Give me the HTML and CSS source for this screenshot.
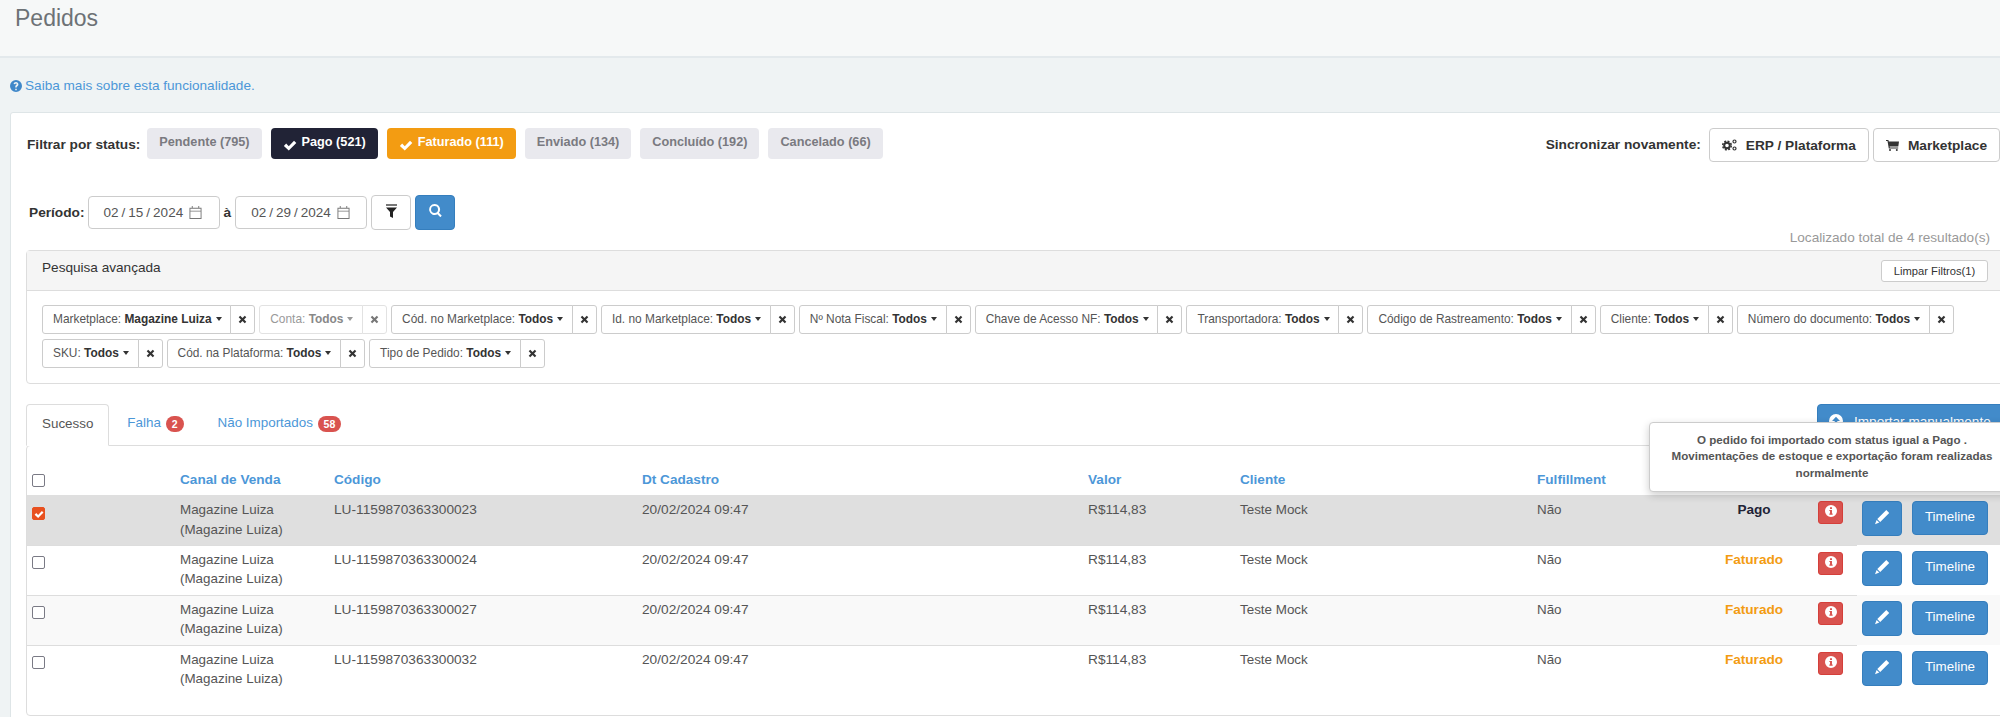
FILE: index.html
```html
<!DOCTYPE html>
<html lang="pt-BR">
<head>
<meta charset="utf-8">
<title>Pedidos</title>
<link rel="stylesheet" href="styles.css">
</head>
<body>
<svg class="sprite" width="0" height="0" aria-hidden="true">
  <symbol id="i-ok" viewBox="0 0 16 16"><path d="M1 9l2.600-2.600 3 3L12.600 3l2.600 2.600-8.600 8.600z"/></symbol>
  <symbol id="i-help" viewBox="0 0 16 16"><path fill-rule="evenodd" d="M8 0a8 8 0 1 1 0 16A8 8 0 0 1 8 0zM7 11.500v2h2v-2zM8 2.600C6.200 2.600 5 3.600 4.800 5.400l2 .3c.1-.8.500-1.200 1.200-1.200.6 0 1 .4 1 .9 0 .5-.3.800-.9 1.300-.8.600-1.100 1.200-1.100 2.200V10h2v-.4c0-.6.200-.8.900-1.300.8-.6 1.300-1.300 1.300-2.400 0-2-1.400-3.300-3.200-3.300z"/></symbol>
  <symbol id="i-cal" viewBox="0 0 14 14"><path fill-rule="evenodd" d="M3 0h1v2h6V0h1v2h2.500v12H.5V2H3zM1.500 3v2h11V3zm0 3v7h11V6z"/></symbol>
  <symbol id="i-filter" viewBox="0 0 11 14"><path fill="#777" d="M0 0h11v2H0z"/><path d="M0 3.500h11L7 8v6l-3-1.500V8z"/></symbol>
  <symbol id="i-search" viewBox="0 0 16 16"><path fill-rule="evenodd" d="M6.800 0a6.800 6.800 0 0 1 5.400 10.900l3.500 3.500-1.800 1.800-3.500-3.500A6.800 6.800 0 1 1 6.800 0zm0 2.500a4.300 4.300 0 1 0 0 8.600 4.300 4.300 0 0 0 0-8.600z"/></symbol>
  <symbol id="i-gears" viewBox="0 0 15 12">
    <g fill="none" stroke="currentColor">
      <circle cx="5" cy="6.500" r="2.800" stroke-width="2"/>
      <circle cx="5" cy="6.500" r="4.300" stroke-width="1.500" stroke-dasharray="2 1.380"/>
      <circle cx="12.500" cy="2.500" r="1.500" stroke-width="1.200"/>
      <circle cx="12.500" cy="9.500" r="1.500" stroke-width="1.200"/>
    </g>
  </symbol>
  <symbol id="i-cart" viewBox="0 0 13 11"><path d="M0 0h2.400l.4 1.400H13l-.7 5H3.600l.2 1.100h8.400v1H2.800L1.500 1H0z"/><circle cx="4" cy="10" r="1"/><circle cx="10.800" cy="10" r="1"/></symbol>
  <symbol id="i-pen" viewBox="0 0 16 16"><path d="M12.300 1l2.900 2.900-9 9L3.300 10zM2.600 10.900l2.700 2.700-4.300 1.600z"/></symbol>
  <symbol id="i-info" viewBox="0 0 16 16"><path fill-rule="evenodd" d="M8 0a8 8 0 1 1 0 16A8 8 0 0 1 8 0zM6.700 3v2.400h2.600V3zM5.800 6.600v1.500h.9v3.200h-.9v1.600h4.400v-1.600h-.9V6.600z"/></symbol>
  <symbol id="i-up" viewBox="0 0 16 16"><path fill-rule="evenodd" d="M8 0a8 8 0 1 1 0 16A8 8 0 0 1 8 0zm0 3L3.500 8H6.500v4.500h3V8h3z"/></symbol>
  <symbol id="i-x" viewBox="0 0 10 10"><path d="M2.500.8L5 3.300 7.500.8l1.700 1.700L6.700 5l2.500 2.500-1.700 1.700L5 6.700 2.500 9.200.8 7.500 3.300 5 .8 2.500z"/></symbol>
</svg>

<header class="page-head"><h1>Pedidos</h1></header>

<p class="help"><svg class="ic help-ic"><use href="#i-help"/></svg> <a href="#">Saiba mais sobre esta funcionalidade.</a></p>

<main class="card">
  <div class="status-row">
    <div class="status-group">
      <span class="lbl">Filtrar por status:</span>
      <a class="chip">Pendente (795)</a>
      <a class="chip dark"><svg class="ic ok"><use href="#i-ok"/></svg>Pago (521)</a>
      <a class="chip orange"><svg class="ic ok"><use href="#i-ok"/></svg>Faturado (111)</a>
      <a class="chip">Enviado (134)</a>
      <a class="chip">Concluído (192)</a>
      <a class="chip">Cancelado (66)</a>
    </div>
    <div class="sync">
      <span class="lbl sync-lbl">Sincronizar novamente:</span>
      <button class="btn-sync"><svg class="ic ic-gears"><use href="#i-gears"/></svg>ERP / Plataforma</button>
      <button class="btn-sync"><svg class="ic ic-cart"><use href="#i-cart"/></svg>Marketplace</button>
    </div>
  </div>

  <div class="period-row">
    <span class="lbl">Período:</span>
    <span class="date"><span>02</span><i>/</i><span>15</span><i>/</i><span>2024</span><svg class="ic cal"><use href="#i-cal"/></svg></span>
    <span class="lbl a">à</span>
    <span class="date"><span>02</span><i>/</i><span>29</span><i>/</i><span>2024</span><svg class="ic cal"><use href="#i-cal"/></svg></span>
    <button class="btn-filter"><svg class="ic ic-filter"><use href="#i-filter"/></svg></button>
    <button class="btn-search"><svg class="ic"><use href="#i-search"/></svg></button>
  </div>

  <div class="results">Localizado total de 4 resultado(s)</div>

  <section class="panel">
    <div class="panel-head">
      <span>Pesquisa avançada</span>
      <button class="btn-clear">Limpar Filtros(1)</button>
    </div>
    <div class="panel-body">
      <div class="f"><span class="f-l">Marketplace: <b>Magazine Luiza</b><u></u></span><span class="f-x"><svg class="ic"><use href="#i-x"/></svg></span></div>
      <div class="f off"><span class="f-l">Conta: <b>Todos</b><u></u></span><span class="f-x"><svg class="ic"><use href="#i-x"/></svg></span></div>
      <div class="f"><span class="f-l">Cód. no Marketplace: <b>Todos</b><u></u></span><span class="f-x"><svg class="ic"><use href="#i-x"/></svg></span></div>
      <div class="f"><span class="f-l">Id. no Marketplace: <b>Todos</b><u></u></span><span class="f-x"><svg class="ic"><use href="#i-x"/></svg></span></div>
      <div class="f"><span class="f-l">Nº Nota Fiscal: <b>Todos</b><u></u></span><span class="f-x"><svg class="ic"><use href="#i-x"/></svg></span></div>
      <div class="f"><span class="f-l">Chave de Acesso NF: <b>Todos</b><u></u></span><span class="f-x"><svg class="ic"><use href="#i-x"/></svg></span></div>
      <div class="f"><span class="f-l">Transportadora: <b>Todos</b><u></u></span><span class="f-x"><svg class="ic"><use href="#i-x"/></svg></span></div>
      <div class="f"><span class="f-l">Código de Rastreamento: <b>Todos</b><u></u></span><span class="f-x"><svg class="ic"><use href="#i-x"/></svg></span></div>
      <div class="f"><span class="f-l">Cliente: <b>Todos</b><u></u></span><span class="f-x"><svg class="ic"><use href="#i-x"/></svg></span></div>
      <div class="f"><span class="f-l">Número do documento: <b>Todos</b><u></u></span><span class="f-x"><svg class="ic"><use href="#i-x"/></svg></span></div>
      <div class="f"><span class="f-l">SKU: <b>Todos</b><u></u></span><span class="f-x"><svg class="ic"><use href="#i-x"/></svg></span></div>
      <div class="f"><span class="f-l">Cód. na Plataforma: <b>Todos</b><u></u></span><span class="f-x"><svg class="ic"><use href="#i-x"/></svg></span></div>
      <div class="f"><span class="f-l">Tipo de Pedido: <b>Todos</b><u></u></span><span class="f-x"><svg class="ic"><use href="#i-x"/></svg></span></div>
    </div>
  </section>

  <div class="tabs-row">
    <nav class="tabs">
      <a class="tab active">Sucesso</a>
      <a class="tab">Falha <span class="badge">2</span></a>
      <a class="tab">Não Importados <span class="badge">58</span></a>
    </nav>
    <button class="btn-import"><svg class="ic"><use href="#i-up"/></svg>Importar manualmente</button>
    <div class="tooltip">O pedido foi importado com status igual a Pago .<br>Movimentações de estoque e exportação foram realizadas normalmente</div>
  </div>

  <section class="table-wrap">
    <table>
      <colgroup>
        <col class="c-check"><col class="c-canal"><col class="c-cod"><col class="c-dt"><col class="c-val"><col class="c-cli"><col class="c-ful"><col class="c-st"><col class="c-info"><col class="c-act">
      </colgroup>
      <thead>
        <tr><th><span class="box"></span></th><th>Canal de Venda</th><th>Código</th><th>Dt Cadastro</th><th>Valor</th><th>Cliente</th><th>Fulfillment</th><th></th><th></th><th></th></tr>
      </thead>
      <tbody>
        <tr class="sel">
          <td><span class="box on"><svg class="ic"><use href="#i-ok"/></svg></span></td>
          <td>Magazine Luiza<br>(Magazine Luiza)</td><td class="num">LU-1159870363300023</td><td class="num">20/02/2024 09:47</td><td class="num">R$114,83</td><td>Teste Mock</td><td>Não</td>
          <td class="st st-pago">Pago</td>
          <td><button class="btn-info"><svg class="ic"><use href="#i-info"/></svg></button></td>
          <td class="acts"><button class="btn-edit"><svg class="ic"><use href="#i-pen"/></svg></button><button class="btn-time">Timeline</button></td>
        </tr>
        <tr>
          <td><span class="box"></span></td>
          <td>Magazine Luiza<br>(Magazine Luiza)</td><td class="num">LU-1159870363300024</td><td class="num">20/02/2024 09:47</td><td class="num">R$114,83</td><td>Teste Mock</td><td>Não</td>
          <td class="st st-fat">Faturado</td>
          <td><button class="btn-info"><svg class="ic"><use href="#i-info"/></svg></button></td>
          <td class="acts"><button class="btn-edit"><svg class="ic"><use href="#i-pen"/></svg></button><button class="btn-time">Timeline</button></td>
        </tr>
        <tr class="alt">
          <td><span class="box"></span></td>
          <td>Magazine Luiza<br>(Magazine Luiza)</td><td class="num">LU-1159870363300027</td><td class="num">20/02/2024 09:47</td><td class="num">R$114,83</td><td>Teste Mock</td><td>Não</td>
          <td class="st st-fat">Faturado</td>
          <td><button class="btn-info"><svg class="ic"><use href="#i-info"/></svg></button></td>
          <td class="acts"><button class="btn-edit"><svg class="ic"><use href="#i-pen"/></svg></button><button class="btn-time">Timeline</button></td>
        </tr>
        <tr>
          <td><span class="box"></span></td>
          <td>Magazine Luiza<br>(Magazine Luiza)</td><td class="num">LU-1159870363300032</td><td class="num">20/02/2024 09:47</td><td class="num">R$114,83</td><td>Teste Mock</td><td>Não</td>
          <td class="st st-fat">Faturado</td>
          <td><button class="btn-info"><svg class="ic"><use href="#i-info"/></svg></button></td>
          <td class="acts"><button class="btn-edit"><svg class="ic"><use href="#i-pen"/></svg></button><button class="btn-time">Timeline</button></td>
        </tr>
      </tbody>
    </table>
  </section>
</main>
</body>
</html>
```

FILE: styles.css
```css
* { box-sizing: border-box; }
html, body { margin: 0; height: 717px; overflow: hidden; }
body { width: 2000px; background: #eff3f4; font: 13.6px/20px "Liberation Sans", Arial, sans-serif; color: #555; }
.sprite { position: absolute; }
.ic { display: block; width: 14px; height: 14px; fill: currentColor; flex: none; }
button { font-family: inherit; cursor: pointer; }

.page-head { height: 58px; background: #f6f8f8; border-bottom: 2px solid #e3e9ec; padding-left: 15px; }
.page-head h1 { margin: 0; font-size: 23px; font-weight: 400; line-height: 36px; color: #6d7276; }

.help { display: flex; align-items: center; gap: 3px; margin: 18px 0 16px 10px; height: 20px; font-size: 13.6px; }
.help a { color: #4c97d8; text-decoration: none; }
.help-ic { width: 12px; height: 12px; color: #3f87c9; }

.card { margin: 0 -20px 0 10px; background: #fff; border: 1px solid #dee5e7; padding: 15px 16px 0 15px; border-radius: 3px 0 0 0; height: 620px; }

.status-row { display: flex; justify-content: space-between; height: 35px; }
.status-group { display: flex; gap: 9px; }
.lbl { font-weight: 700; color: #333; font-size: 13.7px; }
.status-group .lbl { margin: 7px -2px 0 1px; }
.chip { display: flex; align-items: center; height: 31px; padding: 0 12px 3px; background: #e9e9ee; border-radius: 4px; font-weight: 700; font-size: 12.7px; color: #7a7a80; }
.chip.dark { background: #212336; color: #fff; }
.chip.orange { background: #f39c12; color: #fff; }
.ok { width: 14px; height: 14px; margin: 5px 5px 0 0; }
.sync { display: flex; gap: 4px; align-items: flex-start; margin-right: 3px; }
.sync-lbl { margin: 7px 4px 0 0; }
.btn-sync { display: flex; align-items: center; gap: 9px; height: 34px; padding: 0 12px; background: #fff; border: 1px solid #ccc; border-radius: 4px; font-size: 13.7px; font-weight: 700; color: #333; }
.btn-sync .ic-gears { width: 15px; height: 12px; }
.btn-sync .ic-cart { width: 13px; height: 11px; }

.period-row { display: flex; align-items: center; height: 35px; margin-top: 32px; padding-left: 3px; }
.period-row .lbl { margin-right: 3px; }
.period-row .a { margin: 0 4px; }
.date { display: flex; align-items: center; width: 132px; height: 33px; padding-left: 15px; background: #fff; border: 1px solid #ccc; border-radius: 4px; color: #555; font-size: 13.5px; }
.date i { font-style: normal; margin: 0 3px; }
.cal { width: 13px; height: 13px; margin-left: 6px; color: #777; }
.btn-filter, .btn-search { display: flex; align-items: center; justify-content: center; width: 40px; height: 35px; border-radius: 4px; padding: 0 0 4px; }
.btn-filter { margin-left: 4px; background: #fff; border: 1px solid #ccc; color: #222; }
.btn-filter .ic-filter { width: 11px; height: 14px; }
.btn-search { margin-left: 4px; background: #428bca; border: 1px solid #357ebd; color: #fff; }
.btn-search .ic { width: 13px; height: 13px; }

.results { height: 20px; margin-top: -2px; text-align: right; color: #999; font-size: 13.6px; padding-right: 13px; }

.panel { margin: 2px -16px 0 0; border: 1px solid #ddd; border-radius: 4px; background: #fff; }
.panel-head { display: flex; justify-content: space-between; align-items: center; height: 40px; padding: 0 30px 0 15px; background: #f5f5f5; border-bottom: 1px solid #ddd; color: #333; font-size: 13.6px; }
.panel-head span { margin-top: -6px; }
.btn-clear { height: 22px; width: 107px; padding: 0; background: #fff; border: 1px solid #ccc; border-radius: 3px; font-size: 11.2px; color: #333; margin-top: 1px; }
.panel-body { display: flex; flex-wrap: wrap; gap: 5px 4px; padding: 14px 15px 15px; }
.f { display: flex; height: 29px; font-size: 11.9px; color: #555; }
.f-l { display: flex; align-items: center; white-space: pre; padding: 0 8.7px 2px 10px; background: #fff; border: 1px solid #ccc; border-radius: 3px 0 0 3px; }
.f-l b { color: #333; }
.f-l u { width: 0; height: 0; margin-left: 4px; border-left: 3.5px solid transparent; border-right: 3.5px solid transparent; border-top: 4px solid #333; }
.f-x { display: flex; align-items: center; justify-content: center; width: 25px; margin-left: -1px; background: #fff; border: 1px solid #ccc; border-radius: 0 3px 3px 0; color: #333; }
.f-x .ic { width: 9px; height: 9px; }
.f.off .f-l { color: #999; border-color: #e2e2e2; }
.f.off .f-l b { color: #888; }
.f.off .f-l u { border-top-color: #999; }
.f.off .f-x { border-color: #e2e2e2; color: #777; }

.tabs-row { position: relative; display: flex; justify-content: space-between; margin: 20px -16px 0 0; height: 41px; }
.tabs { display: flex; }
.tab { display: block; height: 41px; padding: 9px 15px 0; font-size: 13.4px; color: #4c97d8; margin-right: 4px; white-space: nowrap; }
.tab.active { background: #fff; border: 1px solid #ddd; border-bottom-color: #fff; border-radius: 4px 4px 0 0; color: #555; height: 42px; margin-right: 3px; position: relative; z-index: 1; }
.badge { display: inline-block; min-width: 18px; height: 16px; padding: 0 6px; margin-left: 1px; border-radius: 9px; background: #d9534f; color: #fff; font-size: 10.5px; font-weight: 700; line-height: 16px; text-align: center; vertical-align: -1px; }
.btn-import { display: flex; align-items: center; gap: 11px; width: 202px; height: 34px; padding: 0 0 0 11px; background: #428bca; border: 1px solid #357ebd; border-radius: 4px; color: #fff; font-size: 13.6px; }
.tooltip { position: absolute; left: 1623px; top: 18px; z-index: 5; width: 366px; height: 70px; padding: 9px 20px; background: #fff; border: 1px solid #ccc; border-radius: 4px; box-shadow: 0 3px 8px rgba(0,0,0,.2); text-align: center; font-size: 11.6px; line-height: 16.3px; font-weight: 700; color: #555; }

.table-wrap { height: 271px; margin-right: -16px; border: 1px solid #ddd; border-radius: 4px; background: #fff; }
table { width: 1973px; table-layout: fixed; border-collapse: collapse; }
.c-check { width: 148px; } .c-canal { width: 154px; } .c-cod { width: 308px; } .c-dt { width: 446px; } .c-val { width: 152px; } .c-cli { width: 297px; } .c-ful { width: 163px; } .c-st { width: 118px; } .c-info { width: 44px; } .c-act { width: 143px; }
th { height: 49px; padding: 24px 5px 0; text-align: left; font-weight: 700; font-size: 13.6px; color: #4c97d8; vertical-align: top; line-height: 20px; }
td { height: 50px; padding: 5px 5px 0; vertical-align: top; border-top: 1px solid #ddd; font-size: 13.4px; line-height: 19.5px; color: #555; white-space: nowrap; }
tbody tr + tr td { padding-top: 4px; }
td.num { font-size: 13.7px; }
tr.sel td { background: #dfdfdf; border-top: 0; }
tr.alt td { background: #f9f9f9; }
tbody tr:first-child td { border-top: 0; }
.box { display: flex; align-items: center; justify-content: center; width: 13px; height: 13px; margin-top: 4px; border: 1px solid #7a7a85; border-radius: 2px; background: #fff; }
td .box { margin-top: 7px; }
tbody tr + tr .box { margin-top: 6px; }
.box.on { background: #e8501f; border-color: #e8501f; color: #fff; }
.box.on .ic { width: 10px; height: 10px; }
td.st { font-weight: 700; text-align: center; font-size: 13.6px; }
.st-pago { color: #212336; }
.st-fat { color: #f39c12; }
td button { margin-top: 1px; }
tbody tr + tr td button { margin-top: 2px; }
.btn-info { display: flex; align-items: center; justify-content: center; width: 25px; height: 23px; padding: 0; background: #d9534f; border: 1px solid #d43f3a; border-radius: 3px; color: #fff; }
.btn-info .ic { width: 12px; height: 12px; margin-top: -3px; }
td.acts { display: flex; gap: 10px; align-items: flex-start; border-top: 0; height: 50px; }
.btn-edit { display: flex; align-items: center; justify-content: center; width: 40px; height: 35px; padding: 0 0 4px; background: #428bca; border: 1px solid #357ebd; border-radius: 4px; color: #fff; }
.btn-edit .ic { width: 16px; height: 16px; }
.btn-time { width: 76px; height: 34px; padding: 0 0 3px; background: #428bca; border: 1px solid #357ebd; border-radius: 4px; color: #fff; font-size: 13.4px; }
```
